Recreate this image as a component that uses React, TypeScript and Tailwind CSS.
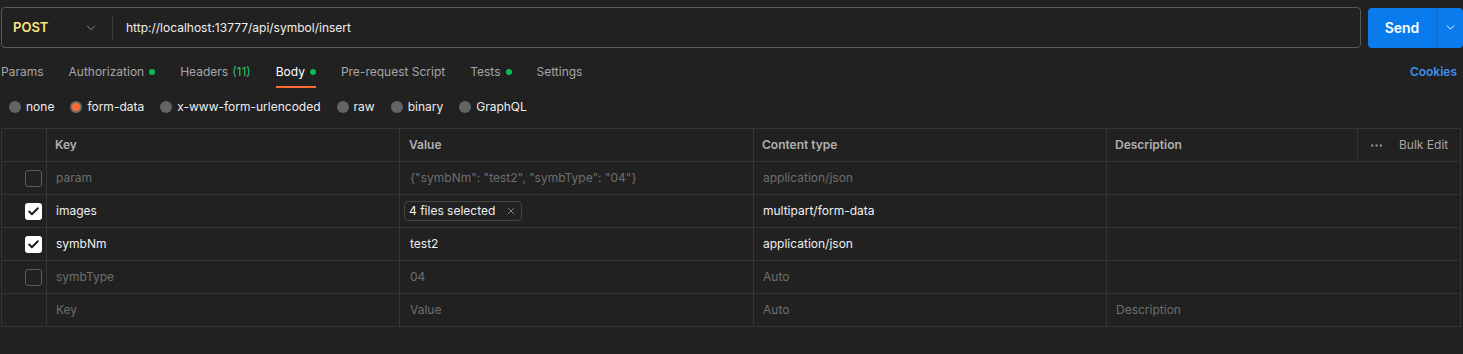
import { ChevronDown, X, Check, MoreHorizontal } from 'lucide-react';

const tabs = [
  { label: 'Params' },
  { label: 'Authorization', dot: true },
  { label: 'Headers', count: '(11)' },
  { label: 'Body', dot: true, active: true },
  { label: 'Pre-request Script' },
  { label: 'Tests', dot: true },
  { label: 'Settings' },
];

const bodyTypes = ['none', 'form-data', 'x-www-form-urlencoded', 'raw', 'binary', 'GraphQL'];

const rows = [
  { key: 'param', value: '{"symbNm": "test2", "symbType": "04"}', type: 'application/json', checked: false },
  { key: 'images', value: 'files', type: 'multipart/form-data', checked: true },
  { key: 'symbNm', value: 'test2', type: 'application/json', checked: true },
  { key: 'symbType', value: '04', type: 'Auto', checked: false },
];

const App = () => {
  return (
    <div
      className="w-[1463px] h-[354px] bg-[#212121] overflow-hidden text-[12px]"
      style={{ fontFamily: 'Inter, "Noto Sans", sans-serif' }}
    >
      {/* URL bar */}
      <div className="flex items-center pt-[7px] gap-[7px]">
        <div className="ml-[1px] w-[1361px] h-[41px] border border-[#595959] rounded-[4px] flex items-center">
          <div className="w-[110px] pl-[11px] pr-[14px] flex items-center justify-between">
            <span className="font-semibold text-[13px] text-[#ffe47e]">POST</span>
            <ChevronDown size={14} strokeWidth={1.5} className="text-[#9a9a9a]" />
          </div>
          <div className="w-px h-[24px] bg-[#3d3d3d]" />
          <div className="pl-[13px] text-[#f0f0f0]">http://localhost:13777/api/symbol/insert</div>
        </div>
        <div className="flex h-[40px] rounded-[4px] bg-[#097bed] text-white">
          <div className="w-[68px] flex items-center justify-center font-semibold text-[14px]">Send</div>
          <div className="w-px bg-[#0a6bd0]" />
          <div className="w-[26px] flex items-center justify-center">
            <ChevronDown size={13} strokeWidth={1.75} />
          </div>
        </div>
      </div>

      {/* Tabs */}
      <div className="flex items-start justify-between mt-[9px]">
        <div className="flex">
          {tabs.map((tab) => (
            <div key={tab.label} className="flex flex-col pl-[1px] mr-[24px]">
              <div
                className={`flex items-center h-[29px] ${tab.active ? 'text-white' : 'text-[#a6a6a6]'}`}
              >
                <span>{tab.label}</span>
                {tab.count && <span className="ml-[4px] text-[#2fc26b]">{tab.count}</span>}
                {tab.dot && <span className="ml-[5px] w-[6px] h-[6px] rounded-full bg-[#0cbb52]" />}
              </div>
              {tab.active && <div className="h-[2px] bg-[#ff6c37]" />}
            </div>
          ))}
        </div>
        <div className="pr-[6px] h-[29px] flex items-center font-semibold text-[#3e8ef0]">Cookies</div>
      </div>

      {/* Body type radios */}
      <div className="flex items-center h-[20px] mt-[9px] pl-[9px] gap-[16px] text-[#ededed]">
        {bodyTypes.map((t) => (
          <label key={t} className="flex items-center gap-[5px]">
            {t === 'form-data' ? (
              <span className="w-[12px] h-[12px] rounded-full bg-[#6b6b6b] flex items-center justify-center">
                <span className="w-[8px] h-[8px] rounded-full bg-[#ff6c37]" />
              </span>
            ) : (
              <span className="w-[12px] h-[12px] rounded-full bg-[#646464]" />
            )}
            <span>{t}</span>
          </label>
        ))}
      </div>

      {/* Table */}
      <div className="ml-[1px] mt-[11px] w-[1460px] border border-[#343434]">
        <div className="flex h-[33px] border-b border-[#343434] font-semibold text-[#b0b0b0]">
          <div className="w-[45px] border-r border-[#343434]" />
          <div className="w-[353px] border-r border-[#343434] pl-[8px] flex items-center">Key</div>
          <div className="w-[354px] border-r border-[#343434] pl-[9px] flex items-center">Value</div>
          <div className="w-[353px] border-r border-[#343434] pl-[8px] flex items-center">Content type</div>
          <div className="w-[251px] border-r border-[#343434] pl-[8px] flex items-center">Description</div>
          <div className="flex-1 flex items-center pl-[11px] gap-[15px] font-normal text-[#a6a6a6]">
            <MoreHorizontal size={15} className="text-[#8a8a8a]" />
            <span>Bulk Edit</span>
          </div>
        </div>
        {rows.map((r) => {
          const txt = r.checked ? 'text-[#f0f0f0]' : 'text-[#6e6e6e]';
          return (
            <div key={r.key} className={`flex h-[33px] border-b border-[#343434] ${txt}`}>
              <div className="w-[45px] border-r border-[#343434] flex items-center justify-end pr-[4px]">
                {r.checked ? (
                  <span className="w-[17px] h-[17px] rounded-[3px] bg-white flex items-center justify-center">
                    <Check size={13} strokeWidth={3.5} className="text-[#1a1a1a]" />
                  </span>
                ) : (
                  <span className="w-[17px] h-[17px] rounded-[3px] border border-[#5c5c5c]" />
                )}
              </div>
              <div className="w-[353px] border-r border-[#343434] pl-[9px] flex items-center">{r.key}</div>
              <div className="w-[354px] border-r border-[#343434] pl-[10px] flex items-center">
                {r.value === 'files' ? (
                  <span className="-ml-[6px] h-[20px] px-[4px] flex items-center gap-[10px] border border-[#444] rounded-[4px] text-[#f0f0f0]">
                    4 files selected
                    <X size={12} strokeWidth={1.5} className="text-[#a0a0a0]" />
                  </span>
                ) : (
                  r.value
                )}
              </div>
              <div className="w-[353px] border-r border-[#343434] pl-[9px] flex items-center">{r.type}</div>
              <div className="flex-1" />
            </div>
          );
        })}
        <div className="flex h-[32px] text-[#6e6e6e]">
          <div className="w-[45px] border-r border-[#343434]" />
          <div className="w-[353px] border-r border-[#343434] pl-[9px] flex items-center">Key</div>
          <div className="w-[354px] border-r border-[#343434] pl-[10px] flex items-center">Value</div>
          <div className="w-[353px] border-r border-[#343434] pl-[9px] flex items-center">Auto</div>
          <div className="flex-1 pl-[9px] flex items-center">Description</div>
        </div>
      </div>
    </div>
  );
};

export default App;
